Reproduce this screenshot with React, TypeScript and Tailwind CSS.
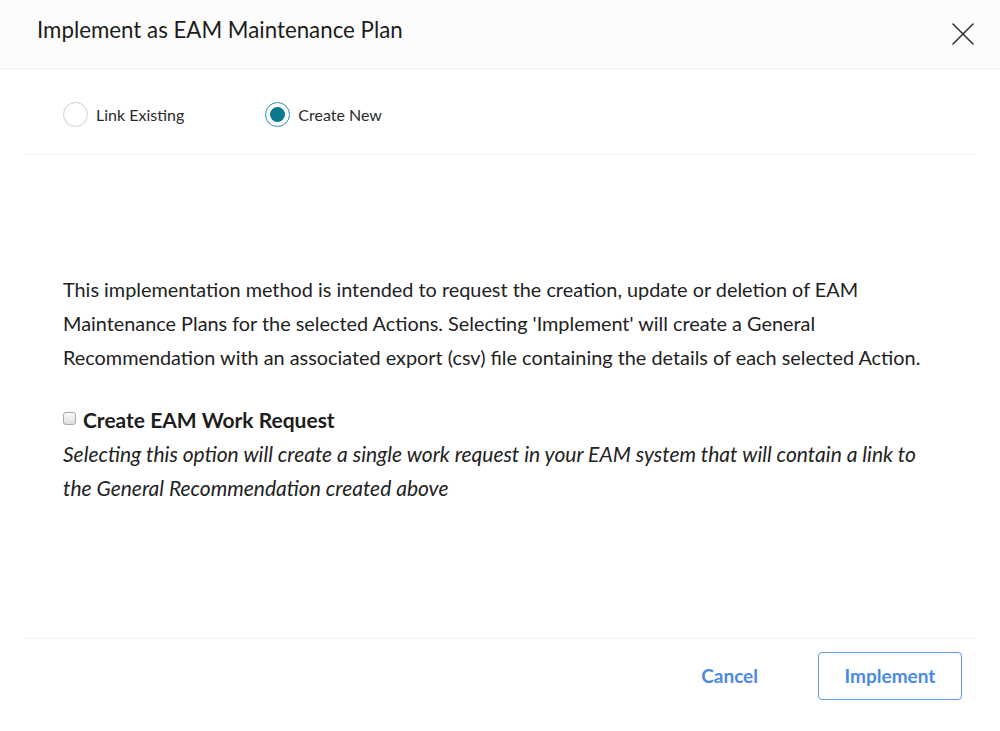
import { X } from "lucide-react";

function Radio({ checked, label }: { checked?: boolean; label: string }) {
  return (
    <label className="flex items-center gap-[8px] cursor-pointer">
      {checked ? (
        <span className="w-[25px] h-[25px] rounded-full border-[1.5px] border-[#2e93a8] flex items-center justify-center bg-white">
          <span className="w-[15px] h-[15px] rounded-full bg-[#0b7891]" />
        </span>
      ) : (
        <span className="w-[25px] h-[25px] rounded-full border-[1.5px] border-[#cfcfcf] bg-white" />
      )}
      <span className="text-[16px] text-[#2b2b2b]">{label}</span>
    </label>
  );
}

export default function App() {
  return (
    <div className="w-full h-screen flex flex-col bg-white text-[#222] font-['Lato',sans-serif]">
      {/* header */}
      <div className="h-[69px] shrink-0 flex items-center justify-between pl-[37px] pr-[17px] bg-[#fcfcfc] border-b border-[#edf0f2]">
        <h1 className="text-[22.3px] text-[#1d1d1d] -mt-[9px]">Implement as EAM Maintenance Plan</h1>
        <X size={40} strokeWidth={0.95} className="text-[#333]" />
      </div>

      {/* body */}
      <div className="flex-1 flex flex-col px-[24px]">
        <div className="h-[86px] shrink-0 flex items-center gap-[81px] pl-[39px] pt-[6px] border-b border-[#eef0f1]">
          <Radio label="Link Existing" />
          <Radio checked label="Create New" />
        </div>

        <div className="pt-[117px] pl-[39px] pr-[31px]">
          <p className="text-[19.85px] leading-[34px] text-[#222]">
            This implementation method is intended to request the creation, update or deletion of EAM Maintenance Plans for the selected Actions. Selecting 'Implement' will create a General Recommendation with an associated export (csv) file containing the details of each selected Action.
          </p>

          <div className="mt-[29px] flex items-center gap-[7px] h-[34px]">
            <span className="w-[13px] h-[13px] rounded-[3px] border border-[#a8a8a8] bg-gradient-to-b from-[#fafafa] to-[#dedede] -mt-[4px]" />
            <span className="text-[21px] font-bold text-[#1d1d1d]">Create EAM Work Request</span>
          </div>
          <p className="text-[21px] leading-[34px] italic text-[#222] pr-[10px]">
            Selecting this option will create a single work request in your EAM system that will contain a link to the General Recommendation created above
          </p>
        </div>
      </div>

      {/* footer */}
      <div className="h-[93px] shrink-0 mx-[24px] border-t border-[#eef0f1] flex items-start justify-end pt-[13px] pr-[14px] gap-[60px]">
        <button className="h-[48px] text-[19px] font-bold text-[#4a8ae6]">Cancel</button>
        <button className="h-[48px] w-[144px] rounded-[4px] border border-[#5d9cf0] text-[19px] font-bold text-[#4a8ae6] bg-white">
          Implement
        </button>
      </div>
    </div>
  );
}
